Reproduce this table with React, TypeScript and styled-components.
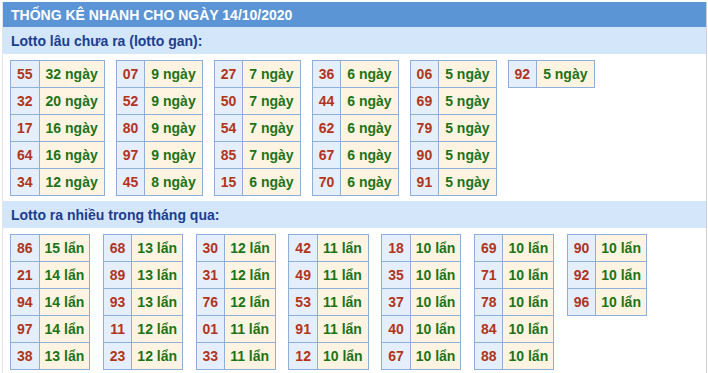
import styled, { createGlobalStyle } from "styled-components";

const GlobalStyle = createGlobalStyle`
  body {
    margin: 0;
    background: #fff;
    font-family: Arial, "Liberation Sans", sans-serif;
  }
`;

const Box = styled.div`
  margin: 2px 0 0 2px;
  width: 705px;
  border-right: 1px solid #cfcfd4;
  border-left: 1px solid #e3e3e8;
  min-height: 371px;
  box-sizing: border-box;
`;

const Title = styled.div`
  height: 25px;
  background: #5b95d5;
  color: #fff;
  font-size: 14px;
  font-weight: bold;
  display: flex;
  align-items: center;
  padding-left: 8px;
`;

const SubTitle = styled.div`
  height: 27px;
  background: #d4e6fa;
  color: #1d3d8f;
  font-size: 14px;
  font-weight: bold;
  display: flex;
  align-items: center;
  padding-left: 8px;
`;

const Tables = styled.div<{ $gap: number }>`
  display: flex;
  flex-wrap: wrap;
  align-items: flex-start;
  gap: ${({ $gap }) => $gap}px;
  padding: 6px 0 5px 7px;
`;

const Table = styled.table`
  border-collapse: collapse;
  font-size: 14px;
  font-weight: bold;
`;

const NumCell = styled.td`
  height: 26px;
  padding: 0 6px;
  border: 1px solid #8eaedb;
  background: #e5effb;
  color: #b2341c;
  text-align: center;
`;

const ValCell = styled.td<{ $pad: number }>`
  height: 26px;
  padding: 0 ${({ $pad }) => $pad}px;
  border: 1px solid #8eaedb;
  background: #fff4e1;
  color: #1c7318;
  white-space: nowrap;
`;

type Pair = [string, number];

const gan: Pair[][] = [
  [["55", 32], ["32", 20], ["17", 16], ["64", 16], ["34", 12]],
  [["07", 9], ["52", 9], ["80", 9], ["97", 9], ["45", 8]],
  [["27", 7], ["50", 7], ["54", 7], ["85", 7], ["15", 6]],
  [["36", 6], ["44", 6], ["62", 6], ["67", 6], ["70", 6]],
  [["06", 5], ["69", 5], ["79", 5], ["90", 5], ["91", 5]],
  [["92", 5]],
];

const nhieu: Pair[][] = [
  [["86", 15], ["21", 14], ["94", 14], ["97", 14], ["38", 13]],
  [["68", 13], ["89", 13], ["93", 13], ["11", 12], ["23", 12]],
  [["30", 12], ["31", 12], ["76", 12], ["01", 11], ["33", 11]],
  [["42", 11], ["49", 11], ["53", 11], ["91", 11], ["12", 10]],
  [["18", 10], ["35", 10], ["37", 10], ["40", 10], ["67", 10]],
  [["69", 10], ["71", 10], ["78", 10], ["84", 10], ["88", 10]],
  [["90", 10], ["92", 10], ["96", 10]],
];

function PairTable({ rows, unit, pad }: { rows: Pair[]; unit: string; pad: number }) {
  return (
    <Table>
      <tbody>
        {rows.map(([num, count]) => (
          <tr key={num}>
            <NumCell>{num}</NumCell>
            <ValCell $pad={pad}>
              {count} {unit}
            </ValCell>
          </tr>
        ))}
      </tbody>
    </Table>
  );
}

export default function App() {
  return (
    <>
      <GlobalStyle />
      <Box>
        <Title>THỐNG KÊ NHANH CHO NGÀY 14/10/2020</Title>
        <SubTitle>Lotto lâu chưa ra (lotto gan):</SubTitle>
        <Tables $gap={11}>
          {gan.map((rows, i) => (
            <PairTable key={i} rows={rows} unit="ngày" pad={6} />
          ))}
        </Tables>
        <SubTitle>Lotto ra nhiều trong tháng qua:</SubTitle>
        <Tables $gap={12.5}>
          {nhieu.map((rows, i) => (
            <PairTable key={i} rows={rows} unit="lẩn" pad={5} />
          ))}
        </Tables>
      </Box>
    </>
  );
}
